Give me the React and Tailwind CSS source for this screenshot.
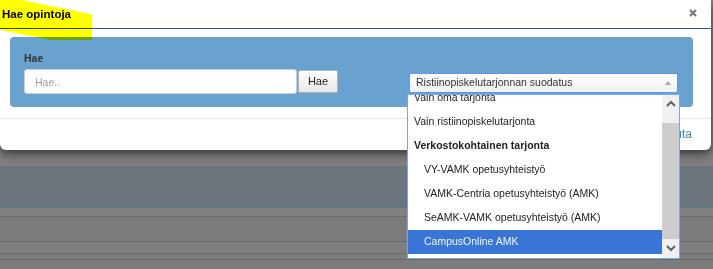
import React from "react";

const items = [
  { label: "Vain oma tarjonta", indent: false },
  { label: "Vain ristiinopiskelutarjonta", indent: false },
  { label: "Verkostokohtainen tarjonta", group: true },
  { label: "VY-VAMK opetusyhteistyö", indent: true },
  { label: "VAMK-Centria opetusyhteistyö (AMK)", indent: true },
  { label: "SeAMK-VAMK opetusyhteistyö (AMK)", indent: true },
  { label: "CampusOnline AMK", indent: true, selected: true },
];

function Chevron({ up }) {
  return (
    <svg width="10" height="7" viewBox="0 0 10 7">
      <path
        d={up ? "M1 6 L5 2 L9 6" : "M1 1 L5 5 L9 1"}
        fill="none"
        stroke="#606060"
        strokeWidth="2"
      />
    </svg>
  );
}

export default function App() {
  return (
    <div className="relative w-[713px] h-[269px] overflow-hidden bg-[#7f7f7f] font-['Liberation_Sans',Arial,sans-serif] flex flex-col">
      {/* modal */}
      <div className="relative z-10 w-[711px] h-[150px] shrink-0 bg-white rounded-b-[6px] shadow-[0_4px_10px_rgba(0,0,0,0.55)] flex flex-col">
        <div className="h-[29px] border-b border-[#2d4f94] flex items-center justify-between pl-[2px] pr-[14px]">
          <h1 className="mt-[2px] text-[11.5px] font-bold text-black leading-none">Hae opintoja</h1>
          <svg className="mb-[2px]" width="8" height="8" viewBox="0 0 8 8">
            <path d="M1 1 L7 7 M7 1 L1 7" stroke="#7a7a7a" strokeWidth="2.2" />
          </svg>
        </div>

        <div className="pt-[8px] pl-[10px] pr-[18px]">
          <div className="h-[70px] bg-[#6aa2cf] rounded-[4px] pl-[14px] pr-[15px] pb-[13px] flex justify-between items-end">
            <div>
              <label className="block text-[10.5px] leading-[12px] font-bold text-[#333] mb-[5px]">Hae</label>
              <div className="flex items-center">
                <input
                  placeholder="Hae.."
                  className="w-[273px] h-[25px] bg-white border border-[#cfcfcf] rounded-[3px] pl-[10px] text-[10.5px] text-[#333] placeholder:text-[#a0a0a0] outline-none"
                />
                <button className="ml-[1px] w-[40px] h-[23px] border border-[#b5b5b5] rounded-[2px] bg-gradient-to-b from-white to-[#e8e8e8] text-[11px] text-[#222]">
                  Hae
                </button>
              </div>
            </div>
            <div className="mb-[1px] w-[269px] h-[20px] border border-[#5897fb] rounded-[2px] bg-gradient-to-b from-white to-[#f0f0f0] flex items-center justify-between pl-[6px] pr-[6px]">
              <span className="text-[10.5px] text-[#333]">Ristiinopiskelutarjonnan suodatus</span>
              <svg width="6" height="4" viewBox="0 0 6 4">
                <path d="M0 4 L3 0 L6 4 Z" fill="#a8a8a8" />
              </svg>
            </div>
          </div>
        </div>

        <div className="mt-[11px] flex-1 border-t border-[#e5e5e5] flex justify-end items-center pr-[19px] pb-[1px]">
          <span className="text-[12px] text-[#3a87c8]">Peruuta</span>
        </div>
      </div>

      {/* page behind the overlay */}
      <div className="mt-[16px] h-[42px] shrink-0 bg-[#6c747c] border-y border-[#5b7a7c]" />
      <div className="h-[8px] shrink-0 bg-[#808080]" />
      <div className="h-[25px] shrink-0 border-t border-[#6a6a6a] bg-[#7b7b7b]" />
      <div className="h-[12px] shrink-0 border-t border-[#6a6a6a] bg-[#7f7f7f]" />
      <div className="h-[6px] shrink-0 border-t border-[#6a6a6a] bg-[#7d7d7d]" />
      <div className="flex-1 border-t border-[#6a6a6a] bg-[#7b7b7b]" />

      {/* open dropdown list */}
      <div className="absolute z-20 left-[407px] top-[94px] w-[273px] h-[165px] border border-[#7ba7e1] bg-white flex">
        <div className="flex-1 overflow-hidden">
          <div className="mt-[-9px]">
            {items.map((it) => (
              <div
                key={it.label}
                className={`h-[24px] flex items-center text-[10.5px] ${
                  it.indent ? "pl-[16px]" : "pl-[6px]"
                } ${it.group ? "font-bold text-[#222]" : "text-[#222]"} ${
                  it.selected ? "bg-[#3875d7] text-[#f4f4f4]" : ""
                }`}
              >
                {it.label}
              </div>
            ))}
          </div>
        </div>
        <div className="w-[17px] bg-[#f0f0f0] flex flex-col">
          <div className="h-[17px] flex items-center justify-center">
            <Chevron up />
          </div>
          <div className="h-[11px]" />
          <div className="h-[116px] bg-[#cdcdcd]" />
          <div className="flex-1 flex items-center justify-center">
            <Chevron />
          </div>
        </div>
      </div>

      {/* highlighter mark */}
      <svg
        className="absolute z-30 left-0 top-0 mix-blend-multiply"
        width="93"
        height="41"
        viewBox="0 0 93 41"
      >
        <polygon points="0,0 22,0 90,14 92,14 92,40 52,40 0,30" fill="#ffff00" />
      </svg>
    </div>
  );
}
